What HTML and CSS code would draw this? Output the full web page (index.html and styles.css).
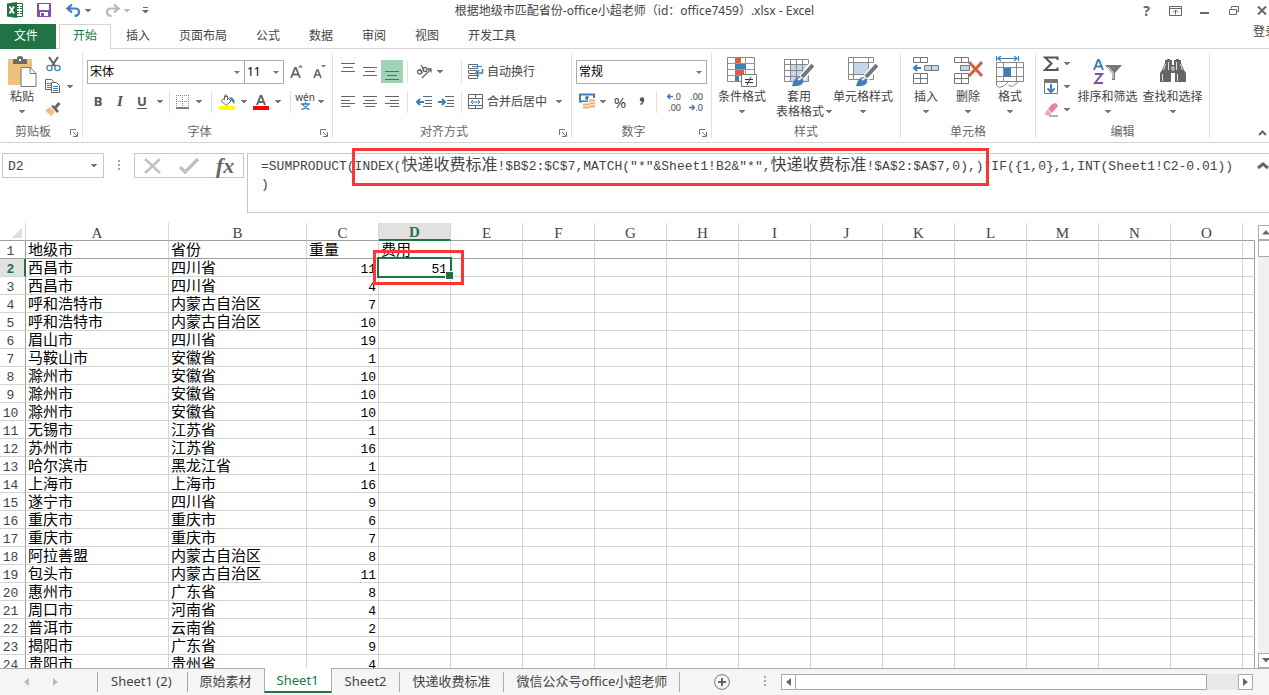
FILE: index.html
```html
<!DOCTYPE html>
<html lang="zh-CN">
<head>
<meta charset="utf-8">
<title>根据地级市匹配省份-office小超老师（id：office7459）.xlsx - Excel</title>
<link rel="stylesheet" href="styles.css">
<script src="sheet.js" defer></script>
</head>
<body>
<header class="titlebar">
  <div class="quick">
    <svg class="app-logo" width="16" height="16" viewBox="0 0 16 16"><path d="M9 1.5h6.500v13H9" fill="#fff" stroke="#217346"/><path d="M10 4.500h2m1 0h2m-5 2h2m1 0h2m-5 3h2m1 0h2m-5 2h2m1 0h2" stroke="#217346"/><path d="M0 1.500 10 0v16L0 14.500z" fill="#217346"/><path d="m2.500 4.500 4.500 7m0-7-4.500 7" stroke="#fff" stroke-width="1.800"/></svg>
    <button class="tool save" aria-label="保存"><svg width="14" height="14" viewBox="0 0 14 14"><path d="M0 0h14v14H0z" fill="#8250a8"/><path d="M2 1h10v6H2zM3 9h8v4H3z" fill="#fff"/><path d="M4 10h3v3H4z" fill="#8250a8"/></svg></button>
    <button class="tool undo" aria-label="撤消"><svg width="15" height="13" viewBox="0 0 15 13"><path d="M2 4.500h7q4 0 4 3.500 0 3.500-4.500 4M6 .5l-4.500 4 4.500 4" fill="none" stroke="#3f7dbb" stroke-width="2.200"/></svg></button>
    <span class="caret"></span>
    <button class="tool redo" aria-label="恢复"><svg width="15" height="13" viewBox="0 0 15 13"><path d="M13 4.500H6Q2 4.500 2 8q0 3.500 4.500 4M9 .5l4.500 4-4.500 4" fill="none" stroke="#b9b9b9" stroke-width="2.200"/></svg></button>
    <span class="caret pale"></span>
    <button class="tool custom" aria-label="自定义快速访问工具栏"><svg width="7" height="8" viewBox="0 0 7 8"><path d="M1 1.500h5" stroke="#666"/><path d="M0 4h7L3.500 7.500z" fill="#666"/></svg></button>
  </div>
  <h1 class="doc-title">根据地级市匹配省份-office小超老师（id：office7459）.xlsx - Excel</h1>
  <div class="window-tools">
    <button class="help" aria-label="帮助">?</button>
    <button aria-label="功能区显示选项"><svg width="13" height="10" viewBox="0 0 13 10"><path d="M.5.500h12v9H.5zM.5 2.500h12M6.500 8.500v-4M4 6.500l2.500-2.500L9 6.500" fill="none" stroke="#666"/></svg></button>
    <button aria-label="最小化"><svg width="9" height="10" viewBox="0 0 9 10"><path d="M0 7h9" stroke="#666" stroke-width="2"/></svg></button>
    <button aria-label="还原"><svg width="10" height="9" viewBox="0 0 10 9"><path d="M2.500 2.500V.5h7v5h-2" fill="none" stroke="#666"/><path d="M.5 3.500h7v5h-7z" fill="#fff" stroke="#666"/></svg></button>
    <button class="last" aria-label="关闭"><svg width="10" height="9" viewBox="0 0 10 9"><path d="m1 .5 8 8m0-8-8 8" stroke="#666" stroke-width="2"/></svg></button>
  </div>
</header>

<nav class="tabs">
  <button class="file-tab">文件</button>
  <button class="tab active">开始</button>
  <button class="tab">插入</button>
  <button class="tab">页面布局</button>
  <button class="tab">公式</button>
  <button class="tab">数据</button>
  <button class="tab">审阅</button>
  <button class="tab">视图</button>
  <button class="tab">开发工具</button>
  <a class="signin" href="#">登录</a>
</nav>

<section class="ribbon">
  <div class="group clipboard">
    <div class="body">
      <button class="big paste"><svg width="30" height="32" viewBox="0 0 30 32"><path d="M1 3h24v26H1z" fill="#ecc27c"/><path d="M6 3h4V1q3-2 6 0v2h4v5H6z" fill="#6a6a6a"/><path d="M12 3h2v2h-2z" fill="#fff"/><path d="M14 11.500h9l6 6v13H14z" fill="#fff" stroke="#777"/><path d="M23 11.500v6h6" fill="none" stroke="#777"/></svg><span>粘贴</span><span class="caret"></span></button>
      <div class="stack">
        <div class="line"><button class="tool" aria-label="剪切"><svg width="15" height="16" viewBox="0 0 15 16"><path d="m3 1 6 9M12 1 6 10" stroke="#666" stroke-width="2.200"/><circle cx="3.500" cy="12" r="2.600" fill="none" stroke="#3f7dbb" stroke-width="1.300"/><circle cx="11.500" cy="12" r="2.600" fill="none" stroke="#3f7dbb" stroke-width="1.300"/></svg></button></div>
        <div class="line"><button class="tool" aria-label="复制"><svg width="16" height="15" viewBox="0 0 16 15"><path d="M.5.500h6l2 2v8h-8z" fill="#fff" stroke="#666"/><path d="M2 4.500h4m-4 2h4m-4 2h4" stroke="#3f7dbb"/><path d="M6.500 3.500h5l3 3v7h-8z" fill="#fff" stroke="#666"/><path d="M8 7.500h5m-5 2h5m-5 2h5" stroke="#3f7dbb"/></svg></button><span class="caret"></span></div>
        <div class="line"><button class="tool" aria-label="格式刷"><svg width="16" height="15" viewBox="0 0 16 15"><path d="m5 5 5 5-4 4-6-5.500z" fill="#ecc27c"/><path d="m6 4 2-1 6 6-2 2z" fill="#666"/><path d="m10 6 4.500-5" stroke="#666" stroke-width="3"/></svg></button></div>
      </div>
    </div>
    <div class="caption"><span>剪贴板</span><button class="launcher" aria-label="剪贴板选项"><svg width="8" height="8" viewBox="0 0 8 8"><path d="M.5 6V.5H6M3 3l4 4M7.500 3v4.500H3" fill="none" stroke="#777"/></svg></button></div>
  </div>

  <div class="group font">
    <div class="body rows">
      <div class="line">
        <span class="select family"><select aria-label="字体"><option>宋体</option></select></span>
        <span class="select size"><select aria-label="字号"><option>11</option></select></span>
        <button class="tool grow" aria-label="增大字号"><svg width="14" height="16" viewBox="0 0 14 16"><path d="m1 14 4-10h1l4 10M3 10.500h5.500" fill="none" stroke="#666" stroke-width="1.800"/><path d="M8 3.500h5L10.500 1z" fill="#3f7dbb"/></svg></button>
        <button class="tool w22" aria-label="减小字号"><svg width="13" height="16" viewBox="0 0 13 16"><path d="m1 14 3-8h1l3 8M2.500 11h4" fill="none" stroke="#666" stroke-width="1.600"/><path d="M8 1h5l-2.500 2.500z" fill="#3f7dbb"/></svg></button>
      </div>
      <div class="line">
        <button class="tool w22 letter bold">B</button>
        <button class="tool w22 letter italic">I</button>
        <button class="tool w22 letter under">U</button>
        <span class="caret wide"></span><i class="sep"></i>
        <button class="tool w22" aria-label="边框"><svg width="14" height="14" viewBox="0 0 14 14"><path d="M.5 0v12M6.500 0v12M12.500 0v12M0 .5h13M0 6.500h13" stroke="#888" stroke-dasharray="1 1"/><path d="M0 13h13" stroke="#555" stroke-width="1.500"/></svg></button>
        <span class="caret"></span><i class="sep left"></i>
        <button class="tool w24" aria-label="填充颜色"><svg width="17" height="16" viewBox="0 0 17 16"><path d="m7 2 5 5-5 4.500L2.500 7z" fill="#fff" stroke="#666"/><path d="M5.500 6V2q1-3 3 0v4" fill="none" stroke="#666"/><path d="M10 3q6 0 5.500 7l-3-3z" fill="#3f7dbb"/><path d="M0 12h16v4H0z" fill="#ff0"/></svg></button>
        <span class="caret"></span>
        <button class="tool w24" aria-label="字体颜色"><svg width="16" height="16" viewBox="0 0 16 16"><path d="m4 11 3.500-9h1l3.500 9M5.500 8h5" fill="none" stroke="#666" stroke-width="2"/><path d="M0 12h16v4H0z" fill="red"/></svg></button>
        <span class="caret"></span><i class="sep left"></i>
        <button class="tool w22 pinyin" aria-label="拼音"><span>wén</span><svg width="9" height="8" viewBox="0 0 9 8"><path d="M4.500 0v2M0 2h9M2 2.500q2 4 6.500 5M7 2.500q-2 4-6.500 5" fill="none" stroke="#3f7dbb" stroke-width="1.300"/></svg></button>
        <span class="caret"></span>
      </div>
    </div>
    <div class="caption"><span>字体</span><button class="launcher" aria-label="字体设置"><svg width="8" height="8" viewBox="0 0 8 8"><path d="M.5 6V.5H6M3 3l4 4M7.500 3v4.500H3" fill="none" stroke="#777"/></svg></button></div>
  </div>

  <div class="group align">
    <div class="body rows">
      <div class="line">
        <button class="tool w22" aria-label="顶端对齐"><svg width="14" height="17" viewBox="0 0 14 17"><path d="M0 .5h14M2 4.500h10M0 8.500h14" stroke="#666"/></svg></button>
        <button class="tool w22" aria-label="垂直居中"><svg width="14" height="17" viewBox="0 0 14 17"><path d="M0 4.500h14M2 8.500h10M0 12.500h14" stroke="#666"/></svg></button>
        <button class="tool w22 on" aria-label="底端对齐"><svg width="14" height="17" viewBox="0 0 14 17"><path d="M0 8.500h14M2 12.500h10M0 16.500h14" stroke="#666"/></svg></button>
        <i class="sep near"></i>
        <button class="tool w22" aria-label="方向"><svg width="17" height="16" viewBox="0 0 17 16"><g fill="none" stroke="#666" stroke-width="1.300"><circle cx="3.500" cy="8" r="2"/><path d="m3.500 5 3 4"/><circle cx="9" cy="5.500" r="2"/><path d="m5 1 3 5"/></g><path d="m6 14 9-9M11.500 5H15v3.500" fill="none" stroke="#666" stroke-width="1.300"/></svg></button>
        <span class="caret"></span><i class="sep far"></i>
        <button class="tool text"><svg width="16" height="16" viewBox="0 0 16 16"><path d="M.5.500h9v4h-9zM.5 6.500h8v3h-8zM.5 11.500h9v3h-9z" fill="#fff" stroke="#666"/><path d="M4 2.500h10" stroke="#3f7dbb"/><path d="M14.500 5v4H8m3-3L8 9l3 3" fill="none" stroke="#3f7dbb" stroke-width="1.500"/></svg>自动换行</button>
      </div>
      <div class="line">
        <button class="tool w22" aria-label="左对齐"><svg width="14" height="12" viewBox="0 0 14 12"><path d="M0 .5h14M0 4.500h9M0 7.500h14M0 10.500h9" stroke="#666"/></svg></button>
        <button class="tool w22" aria-label="居中"><svg width="14" height="12" viewBox="0 0 14 12"><path d="M0 .5h14M2 4.500h10M0 7.500h14M2 10.500h10" stroke="#666"/></svg></button>
        <button class="tool w22" aria-label="右对齐"><svg width="14" height="12" viewBox="0 0 14 12"><path d="M0 .5h14M5 4.500h9M0 7.500h14M5 10.500h9" stroke="#666"/></svg></button>
        <i class="sep near"></i>
        <button class="tool w22" aria-label="减少缩进量"><svg width="16" height="12" viewBox="0 0 16 12"><path d="M7 .5h9M9 4.500h7M9 7.500h7M7 10.500h9" stroke="#666"/><path d="M1 6h7M4 3 1 6l3 3" fill="none" stroke="#3f7dbb" stroke-width="2"/></svg></button>
        <button class="tool w22" aria-label="增加缩进量"><svg width="16" height="12" viewBox="0 0 16 12"><path d="M7 .5h9M9 4.500h7M9 7.500h7M7 10.500h9" stroke="#666"/><path d="M0 6h7M4 3l3 3-3 3" fill="none" stroke="#3f7dbb" stroke-width="2"/></svg></button>
        <i class="sep slim"></i>
        <button class="tool text"><svg width="16" height="16" viewBox="0 0 16 16"><path d="M.5.500h14v14H.5zM.5 4.500h14m-14 7h14M7.500 0v4m0 8v3" fill="none" stroke="#666"/><path d="M3 8h9M5 6 3 8l2 2m5-4 2 2-2 2" fill="none" stroke="#3f7dbb"/></svg>合并后居中</button>
        <span class="caret drop"></span>
      </div>
    </div>
    <div class="caption"><span>对齐方式</span><button class="launcher" aria-label="对齐设置"><svg width="8" height="8" viewBox="0 0 8 8"><path d="M.5 6V.5H6M3 3l4 4M7.500 3v4.500H3" fill="none" stroke="#777"/></svg></button></div>
  </div>

  <div class="group number">
    <div class="body rows">
      <div class="line"><span class="select format"><select aria-label="数字格式"><option>常规</option></select></span></div>
      <div class="line">
        <button class="tool w22" aria-label="会计数字格式"><svg width="17" height="17" viewBox="0 0 17 17"><path d="M1 1.500h14v7H1z" fill="#fff" stroke="#3f7dbb" stroke-width="2"/><circle cx="8" cy="5" r="2" fill="#3f7dbb"/><path d="M9 5h7v10H9zM3 9h7v7H3z" fill="#fff"/><path d="M10 7.500h6m-6 3h6m-6 3h6m-12-2h6m-6 3h6" stroke="#e8b264" stroke-width="2"/></svg></button>
        <span class="caret"></span>
        <button class="tool w24 percent">%</button>
        <button class="tool w20" aria-label="千位分隔样式"><svg width="6" height="9" viewBox="0 0 6 9"><circle cx="3" cy="2.500" r="2.200" fill="#555"/><path d="M4.500 2.500Q4.500 6 1.500 7.500" fill="none" stroke="#555" stroke-width="1.400"/></svg></button>
        <i class="sep near"></i>
        <button class="tool w22 decimals" aria-label="增加小数位数"><span><svg width="6" height="7" viewBox="0 0 6 7"><path d="M0 3.500h6M3 1 .8 3.500 3 6" fill="none" stroke="#3f7dbb" stroke-width="1.500"/></svg>.0</span><span>.00</span></button>
        <button class="tool w22 decimals" aria-label="减少小数位数"><span>.00</span><span><svg width="6" height="7" viewBox="0 0 6 7"><path d="M0 3.500h6M3 1l2.200 2.500L3 6" fill="none" stroke="#3f7dbb" stroke-width="1.500"/></svg>.0</span></button>
      </div>
    </div>
    <div class="caption"><span>数字</span><button class="launcher" aria-label="数字设置"><svg width="8" height="8" viewBox="0 0 8 8"><path d="M.5 6V.5H6M3 3l4 4M7.500 3v4.500H3" fill="none" stroke="#777"/></svg></button></div>
  </div>

  <div class="group styles">
    <div class="body">
      <button class="big cond"><svg width="30" height="32" viewBox="0 0 30 32"><path d="M.5 1.500h27v24H.5z" fill="#fff" stroke="#888"/><path d="M8.500 1v25M18.500 1v25M.5 7.500h27m-27 6h27m-27 6h27" stroke="#999"/><path d="M8 2h6v5H8zM8 14h9v5H8z" fill="#d75f43"/><path d="M8 8h11v5H8zM8 20h4v5H8z" fill="#3f7dbb"/><path d="M14.500 18.500h15v12h-15z" fill="#fff" stroke="#777"/><path d="M18 23.500h8m-8 3h8M24 21l-4 8" stroke="#333"/></svg><span>条件格式</span><span class="caret"></span></button>
      <button class="big format-table"><svg width="30" height="32" viewBox="0 0 30 32"><path d="M.5 3.500h24v22H.5z" fill="#fff"/><path d="M7 9h18v17H7z" fill="#c3d6ec"/><path d="M.5 3.500h24v22H.5zM6.500 3v23m6-23v23m6-23v23M.5 8.500h24m-24 6h24m-24 6h24" fill="none" stroke="#888"/><path d="m18 22 11-14" stroke="#fff" stroke-width="7"/><path d="m18 21 11-12" stroke="#777" stroke-width="4"/><path d="M8 30q2-9 8-9 4 2 3 6-4 4-11 3z" fill="#3f7dbb"/><path d="m14 24 3-2" stroke="#fff" stroke-width="2"/></svg><span>套用</span><span class="two">表格格式<span class="caret"></span></span></button>
      <button class="big cell-style"><svg width="30" height="32" viewBox="0 0 30 32"><path d="M.5 1.500h25v22H.5z" fill="#fff"/><path d="M5 6h15v13H5z" fill="#c3d6ec"/><path d="M.5 1.500h25v22H.5zM5.500 1v23m15-23v23M.5 6.500h25m-25 12h25" fill="none" stroke="#888"/><path d="m18 22 11-14" stroke="#fff" stroke-width="7"/><path d="m18 21 11-12" stroke="#777" stroke-width="4"/><path d="M8 30q2-9 8-9 4 2 3 6-4 4-11 3z" fill="#3f7dbb"/><path d="m14 24 3-2" stroke="#fff" stroke-width="2"/></svg><span>单元格样式</span><span class="caret"></span></button>
    </div>
    <div class="caption"><span>样式</span></div>
  </div>

  <div class="group cells">
    <div class="body">
      <button class="big"><svg width="28" height="32" viewBox="0 0 28 32"><g fill="#fff" stroke="#777"><path d="M1.500 1.500h14v5h-14zM8.500 1v6M1.500 17.500h14v10h-14zM8.500 17v11M1.500 22.500h14"/><path d="M12.500 9.500h14v5h-14zM19.500 9v6" fill="#c3d6ec"/></g><path d="M2 12h7M5 9l-3 3 3 3" fill="none" stroke="#3f7dbb" stroke-width="2"/></svg><span>插入</span><span class="caret"></span></button>
      <button class="big"><svg width="30" height="32" viewBox="0 0 30 32"><g fill="#fff" stroke="#777"><path d="M1.500 1.500h14v5h-14zM8.500 1v6M1.500 17.500h14v10h-14zM8.500 17v11M1.500 22.500h14"/><path d="M7.500 9.500h9v5h-9z" fill="#c3d6ec"/></g><path d="m16 6 13 14m0-14L16 20" stroke="#d75f43" stroke-width="3"/></svg><span>删除</span><span class="caret"></span></button>
      <button class="big"><svg width="28" height="32" viewBox="0 0 28 32"><path d="M.5 0v5M22.500 0v5M2 2.500h19M5 0 2 2.500 5 5M18 0l3 2.500L18 5" fill="none" stroke="#3f7dbb" stroke-width="1.200"/><path d="M.5 6.500h27v19H.5zM7.500 6v20m13-20v20M.5 11.500h27m-27 9h27M.5 25.500v4l3 2 5-2 4-4m0 4 4 1 6-5" fill="none" stroke="#888"/><path d="M8 12h7v9H8z" fill="#3f7dbb"/></svg><span>格式</span><span class="caret"></span></button>
    </div>
    <div class="caption"><span>单元格</span></div>
  </div>

  <div class="group editing">
    <div class="body">
      <div class="stack">
        <div class="line"><button class="tool" aria-label="自动求和"><svg width="16" height="16" viewBox="0 0 16 16"><path d="M14.500 4V1.500H2l6.500 6L2 14h12.500v-2.500" fill="none" stroke="#555" stroke-width="2"/></svg></button><span class="caret"></span></div>
        <div class="line"><button class="tool" aria-label="填充"><svg width="14" height="15" viewBox="0 0 14 15"><path d="M.5.500h13v14H.5z" fill="#fff" stroke="#777"/><path d="M0 0h14v4H0z" fill="#777"/><path d="M7 5v8M3.500 9.500 7 13l3.500-3.500" fill="none" stroke="#3f7dbb" stroke-width="2"/></svg></button><span class="caret"></span></div>
        <div class="line"><button class="tool" aria-label="清除"><svg width="15" height="14" viewBox="0 0 15 14"><path d="m8 1 4-1 2 3-6 7-4-4z" fill="#ee8296"/><path d="m3.500 6.500 4 4-2 2-3 0-2-2z" fill="#f4a9b6"/><path d="M5 13h9" stroke="#666"/></svg></button><span class="caret"></span></div>
      </div>
      <button class="big"><svg width="30" height="32" viewBox="0 0 30 32"><path d="m1 14 4-10h1l4 10M3 10.500h5.500" fill="none" stroke="#3f7dbb" stroke-width="2"/><path d="M2 18h7l-7 9h8" fill="none" stroke="#8250a8" stroke-width="2"/><path d="M12 9h17l-7 8v7h-3v-7z" fill="#777"/><path d="m15 11 5 5.500V23" fill="none" stroke="#fff"/></svg><span>排序和筛选</span><span class="caret"></span></button>
      <button class="big"><svg width="26" height="32" viewBox="0 0 26 32"><path d="M5 7V4h2V3h3v1h2v5h2V4h2V3h3v1h2v3l3 7 2 3v9H15v-9h-4v9H0v-9l2-3z" fill="#666"/><path d="M2.500 18v7M5.500 8l-2 6M8.500 6v8M16.500 6v8M20.500 8l2 6M17.500 18v7M12 11h2v3h-2z" fill="none" stroke="#fff" stroke-width=".8"/></svg><span>查找和选择</span><span class="caret"></span></button>
    </div>
    <div class="caption"><span>编辑</span></div>
  </div>
  <button class="collapse" aria-label="折叠功能区"><svg width="9" height="6" viewBox="0 0 9 6"><path d="m1 5 3.500-3.500L8 5" fill="none" stroke="#666" stroke-width="2"/></svg></button>
</section>

<section class="formula-bar">
  <div class="name-box"><input aria-label="名称框" value="D2"><span class="caret"></span></div>
  <svg class="grip" width="2" height="11" viewBox="0 0 2 11"><path d="M0 0h2v2H0zM0 4h2v2H0zM0 8h2v2H0z" fill="#a5a5a5"/></svg>
  <div class="entry-tools">
    <button aria-label="取消"><svg width="18" height="16" viewBox="0 0 18 16"><path d="m1 1 15 14M16 1 1 15" stroke="#c2c2c2" stroke-width="2.500"/></svg></button>
    <button aria-label="输入"><svg width="20" height="16" viewBox="0 0 20 16"><path d="m1 9 5 5L19 1" fill="none" stroke="#c2c2c2" stroke-width="3.500"/></svg></button>
    <button class="fx" aria-label="插入函数">fx</button>
  </div>
  <div class="formula-box">
    <div class="formula" role="textbox" aria-label="编辑栏" contenteditable="true" spellcheck="false">=SUMPRODUCT(INDEX(<span class="han">快递收费标准</span>!$B$2:$C$7,MATCH("*"&amp;Sheet1!B2&amp;"*",<span class="han">快递收费标准</span>!$A$2:$A$7,0),)*IF({1,0},1,INT(Sheet1!C2-0.01))<br>)</div>
    <button class="expand" aria-label="折叠编辑栏"><svg width="12" height="8" viewBox="0 0 12 8"><path d="m1 6 5-4 5 4" fill="none" stroke="#666" stroke-width="3"/></svg></button>
    <div class="mark mark-formula"></div>
  </div>
</section>

<main class="workspace">
  <div class="pane">
    <table class="sheet">
      <colgroup><col class="c-head"><col class="c-a"><col class="c-b"><col class="c-n" span="13"><col></colgroup>
      <thead><tr id="letters"><th class="corner" aria-label="全选"></th></tr></thead>
      <tbody id="rows"></tbody>
    </table>
  </div>
  <div class="vscroll">
    <button aria-label="向上滚动"><svg width="8" height="5" viewBox="0 0 8 5"><path d="M0 4.500h8L4 0z" fill="#666"/></svg></button>
    <div class="vthumb"></div>
    <button class="down" aria-label="向下滚动"><svg width="8" height="5" viewBox="0 0 8 5"><path d="M0 0h8L4 4.500z" fill="#666"/></svg></button>
  </div>
</main>

<footer class="bottom">
  <div class="sheet-nav">
    <button aria-label="上一张"><svg width="5" height="8" viewBox="0 0 5 8"><path d="M5 0v8L0 4z" fill="#bbb"/></svg></button>
    <button aria-label="下一张"><svg width="5" height="8" viewBox="0 0 5 8"><path d="M0 0v8l5-4z" fill="#bbb"/></svg></button>
  </div>
  <button class="sheet-tab">Sheet1 (2)</button>
  <button class="sheet-tab before-current">原始素材</button>
  <button class="sheet-tab current">Sheet1</button>
  <button class="sheet-tab">Sheet2</button>
  <button class="sheet-tab">快递收费标准</button>
  <button class="sheet-tab">微信公众号office小超老师</button>
  <button class="add" aria-label="新工作表"><svg width="16" height="16" viewBox="0 0 16 16"><circle cx="8" cy="8" r="7.400" fill="none" stroke="#777"/><path d="M8 4v8M4 8h8" stroke="#666" stroke-width="2"/></svg></button>
  <svg class="grip" width="2" height="11" viewBox="0 0 2 11"><path d="M0 0h2v2H0zM0 4h2v2H0zM0 8h2v2H0z" fill="#a5a5a5"/></svg>
  <div class="hscroll">
    <button aria-label="向左滚动"><svg width="5" height="8" viewBox="0 0 5 8"><path d="M5 0v8L0 4z" fill="#666"/></svg></button>
    <div class="hthumb"></div>
    <div class="htrack"></div>
    <button aria-label="向右滚动"><svg width="5" height="8" viewBox="0 0 5 8"><path d="M0 0v8l5-4z" fill="#666"/></svg></button>
  </div>
</footer>
</body>
</html>
```

FILE: styles.css
```css
* { box-sizing: border-box; }
body {
  margin: 0;
  height: 100vh;
  display: flex;
  flex-direction: column;
  overflow: hidden;
  background: #fff;
  color: #444;
  font: 12px/16px "Noto Sans", "Noto Sans CJK SC", sans-serif;
}
button {
  margin: 0;
  padding: 0;
  border: 0;
  background: none;
  color: inherit;
  font: inherit;
  white-space: nowrap;
}
svg { display: block; flex: none; }
.caret {
  flex: none;
  width: 10px;
  height: 3px;
  background: linear-gradient(#777, #777) center top / 6px 1px no-repeat,
    linear-gradient(#777, #777) center 1px / 4px 1px no-repeat,
    linear-gradient(#777, #777) center 2px / 2px 1px no-repeat;
}
.caret.pale { opacity: .5; }
.caret.wide { width: 14px; }
.caret.drop { width: 24px; }

/* title bar */
.titlebar {
  display: grid;
  grid-template-columns: 1fr auto 1fr;
  height: 24px;
  flex: none;
}
.quick { display: flex; align-items: center; height: 20px; padding-left: 7px; }
.quick .save { margin-left: 14px; }
.quick .undo { margin-left: 15px; }
.quick .redo { margin-left: 12px; }
.quick .caret { margin-left: 2px; }
.quick .custom { margin-left: 10px; }
.doc-title { margin: 0; padding-top: 3px; font-size: 12px; font-weight: 400; }
.window-tools { display: flex; justify-content: flex-end; height: 21px; }
.window-tools button { width: 29px; display: flex; align-items: center; justify-content: center; }
.window-tools .help { font-size: 14px; font-weight: 700; color: #666; }
.window-tools .last { width: 21px; justify-content: flex-end; padding-right: 2px; }

/* ribbon tabs */
.tabs {
  display: flex;
  align-items: stretch;
  height: 25px;
  flex: none;
  gap: 1px;
  box-shadow: inset 0 -1px #d4d4d4;
}
.file-tab { width: 56px; margin-right: 2px; padding: 0 4px 2px 0; background: #217346; color: #fff; }
.tab { padding: 0 13px 2px; border: 1px solid transparent; border-bottom: 0; }
.tab.active { border-color: #d4d4d4; background: #fff; color: #217346; }
.signin {
  width: 16px;
  margin-left: auto;
  overflow: hidden;
  white-space: nowrap;
  color: #444;
  text-decoration: none;
}

/* ribbon */
.ribbon {
  display: flex;
  height: 94px;
  flex: none;
  border-bottom: 1px solid #d4d4d4;
}
.group {
  display: flex;
  flex-direction: column;
  flex: none;
  margin: 4px 0;
  border-right: 1px solid #e1e1e1;
}
.clipboard { width: 83px; }
.font { width: 250px; }
.align { width: 239px; }
.number { width: 140px; }
.styles { width: 189px; }
.cells { width: 135px; }
.editing { width: 174px; }
.body { display: flex; flex: 1; }
.rows { flex-direction: column; gap: 7px; padding-top: 7px; }
.line { display: flex; align-items: center; height: 23px; }
.font .body, .number .body, .align .body { padding-left: 4px; }
.styles .body { padding-left: 2px; }
.caption { display: flex; align-items: center; height: 13px; text-align: center; color: #666; }
.caption > span { flex: 1; }
.launcher { width: 16px; padding-left: 4px; padding-top: 3px; }
.tool { display: flex; align-items: center; justify-content: center; height: 23px; flex: none; }
.w20 { width: 20px; }
.w22 { width: 22px; }
.w24 { width: 24px; }
.on { background: #9fd5b7; }
.tool.text { gap: 3px; padding-left: 6px; }
.letter { font: bold 13px/23px "Noto Sans", sans-serif; color: #555; }
.italic { font-family: "Liberation Serif", serif; font-style: italic; font-size: 15px; }
.under { text-decoration: underline; text-underline-offset: 2px; }
.sep { width: 1px; height: 22px; margin: 0 2px; background: #e1e1e1; flex: none; }
.sep.left { margin: 0 3px 0 7px; }
.sep.near { margin: 0 5px 0 4px; }
.sep.far { margin: 0 0 0 16px; }
.sep.slim { margin: 0 0 0 4px; }
.stack { display: flex; flex-direction: column; }
.clipboard .stack { padding-left: 3px; }
.clipboard .stack .tool { width: 16px; }
.clipboard .stack .caret { margin-left: 4px; }
.clipboard .stack, .editing .stack { margin-top: -1px; }
.editing .stack { padding-left: 7px; width: 39px; }
.editing .stack .tool { width: 16px; }
.editing .stack .caret { margin-left: 3px; }
.big { display: flex; flex-direction: column; align-items: center; padding-top: 3px; }
.big > span { line-height: 15px; }
.big > svg { margin-bottom: 1px; }
.big > .caret { margin-top: 6px; }
.paste { width: 40px; margin-left: 2px; }
.cond { width: 56px; }
.format-table { width: 58px; }
.cell-style { width: 70px; }
.two { display: flex; align-items: center; padding-left: 12px; }
.cells .body { padding-left: 4px; }
.cells .big { width: 42px; }
.editing .big { width: 65px; }

.select {
  position: relative;
  display: block;
  height: 24px;
  border: 1px solid #ababab;
  background: #fff;
}
.select select {
  width: 100%;
  height: 22px;
  padding: 0 2px;
  border: 0;
  appearance: none;
  background: none;
  color: #000;
  font: inherit;
}
.select::after {
  content: "";
  position: absolute;
  right: 4px;
  top: 10px;
  border: 3px solid transparent;
  border-top-color: #777;
  border-bottom: 0;
}
.family { width: 158px; }
.size { width: 39px; border-left: 0; }
.format { width: 131px; }
.grow { width: 22px; margin-left: 2px; }
.pinyin { flex-direction: column; font-size: 10px; line-height: 9px; }
.percent { font-size: 15px; }
.decimals { flex-direction: column; align-items: flex-end; padding-right: 3px; font-size: 9px; line-height: 11px; }
.decimals span { display: flex; align-items: center; }
.collapse { margin: auto 2px 6px auto; }

/* formula bar */
.formula-bar {
  display: flex;
  align-items: flex-start;
  height: 80px;
  flex: none;
  padding: 10px 0 10px 2px;
}
.name-box {
  display: flex;
  align-items: center;
  width: 102px;
  height: 25px;
  padding-right: 4px;
  border: 1px solid #c6c6c6;
}
.name-box input {
  flex: 1;
  min-width: 0;
  padding: 2px 5px 0;
  border: 0;
  background: none;
  color: #444;
  font: 13px/20px "Liberation Mono", monospace;
}
.formula-bar .grip { margin: 7px 14px 0; }
.entry-tools {
  display: flex;
  justify-content: space-around;
  align-items: center;
  width: 110px;
  height: 25px;
  border: 1px solid #c6c6c6;
}
.fx { font: italic bold 22px/20px "Liberation Serif", serif; color: #666; }
.formula-box {
  position: relative;
  flex: 1;
  height: 60px;
  margin-left: 3px;
  border: 1px solid #c6c6c6;
  border-right: 0;
}
.formula {
  padding: 4px 0 0 13px;
  font: 13px/18px "Liberation Mono", "Noto Sans CJK SC", monospace;
  white-space: nowrap;
}
.han { font-size: 16px; line-height: 16px; }
.expand { position: absolute; right: 0; top: 8px; }
.mark { position: absolute; border: 3px solid #fa3636; pointer-events: none; }
.mark-formula { left: 104px; top: -6px; width: 637px; height: 38px; }

/* worksheet */
.workspace { display: flex; flex: 1; min-height: 0; gap: 3px; }
.pane { flex: 1; min-width: 0; overflow: hidden; }
.sheet {
  width: 100%;
  table-layout: fixed;
  border-collapse: separate;
  border-spacing: 0;
  font: 13px/13px "Liberation Mono", "Noto Sans CJK SC", monospace;
}
.c-head { width: 26px; }
.c-a { width: 143px; }
.c-b { width: 138px; }
.c-n { width: 72px; }
.sheet th, .sheet td {
  height: 18px;
  padding: 4px 0 0;
  border: 0 solid #d4d4d4;
  border-width: 0 1px 1px 0;
  white-space: nowrap;
}
.sheet th { color: #444; font-weight: 400; text-align: center; }
.sheet thead th {
  padding-top: 3px;
  border-bottom-color: #a0a0a0;
  font-family: "Liberation Serif", serif;
  font-size: 15px;
}
.sheet .corner {
  background: linear-gradient(135deg, transparent 50%, #dfdfdf 50%) 12px 5px / 10px 10px no-repeat;
}
.sheet tbody th { border-right-color: #a0a0a0; padding-right: 4px; }
.sheet tbody td:last-child { border-right-color: #a0a0a0; }
.sheet thead th:last-child { border-right-color: transparent; }
.sheet tbody tr:first-child > * { border-bottom-color: #a0a0a0; }
.sheet td { color: #000; }
.sheet .cn { padding-left: 2px; font-size: 15px; }
.sheet .num { padding-right: 2px; text-align: right; }
.sheet .picked { background: #e1e1e1; color: #217346; font-weight: 700; }
.sheet thead .picked { border-bottom: 2px solid #217346; }
.sheet tbody .picked { border-right: 2px solid #217346; padding-right: 3px; }
.sheet .selected { position: relative; padding-right: 3px; }
.cursor { position: absolute; inset: -2px; border: 2px solid #217346; }
.cursor::after {
  content: "";
  position: absolute;
  right: -4px;
  bottom: -4px;
  width: 7px;
  height: 7px;
  border: 1px solid #fff;
  background: #217346;
}
.mark-cell { left: -6px; top: -9px; width: 91px; height: 35px; }

.vscroll {
  display: flex;
  flex-direction: column;
  width: 11px;
  margin-top: 2px;
  background: #f0f0f0;
}
.vscroll button {
  display: flex;
  align-items: center;
  justify-content: center;
  width: 15px;
  height: 15px;
  border: 1px solid #ababab;
  background: #fff;
}
.vthumb { width: 15px; height: 17px; border: 1px solid #ababab; background: #fff; }
.vscroll .down { margin-top: auto; }

/* sheet tabs */
.bottom {
  display: flex;
  height: 27px;
  flex: none;
  background: #f5f5f5;
  box-shadow: inset 0 1px #ababab;
  font-size: 13px;
}
.sheet-nav { display: flex; align-items: center; gap: 24px; width: 98px; padding-left: 24px; position: relative; }
.sheet-nav::after, .sheet-tab::after {
  content: "";
  position: absolute;
  right: 0;
  top: 4px;
  height: 20px;
  border-right: 1px solid #ababab;
}
.sheet-tab { position: relative; height: 25px; padding: 0 13px; }
.sheet-nav + .sheet-tab { padding: 0 16px 0 13px; }
.sheet-tab.before-current { padding: 0 12px; }
.sheet-tab.current {
  padding: 0 12px;
  background: #fff;
  border: 1px solid #ababab;
  border-top: 0;
  border-bottom: 2px solid #217346;
  color: #217346;
}
.sheet-tab.current::after, .before-current::after { display: none; }
.add { margin: 0 34px; }
.bottom .grip { align-self: center; }
.hscroll { display: flex; flex: 1; height: 16px; margin: 6px 16px 0 15px; }
.hscroll button {
  display: flex;
  align-items: center;
  justify-content: center;
  width: 15px;
  border: 1px solid #ababab;
  background: #fff;
}
.hthumb { flex: 1; border: 1px solid #ababab; border-left: 0; background: #fff; }
.htrack { width: 31px; background: #e8e8e8; }
```

FILE: sheet.js
```js
const letters = ["A", "B", "C", "D", "E", "F", "G", "H", "I", "J", "K", "L", "M", "N", "O", ""];
const data = [
  ["地级市", "省份", "重量"],
  ["西昌市", "四川省", 11],
  ["西昌市", "四川省", 4],
  ["呼和浩特市", "内蒙古自治区", 7],
  ["呼和浩特市", "内蒙古自治区", 10],
  ["眉山市", "四川省", 19],
  ["马鞍山市", "安徽省", 1],
  ["滁州市", "安徽省", 10],
  ["滁州市", "安徽省", 10],
  ["滁州市", "安徽省", 10],
  ["无锡市", "江苏省", 1],
  ["苏州市", "江苏省", 16],
  ["哈尔滨市", "黑龙江省", 1],
  ["上海市", "上海市", 16],
  ["遂宁市", "四川省", 9],
  ["重庆市", "重庆市", 6],
  ["重庆市", "重庆市", 7],
  ["阿拉善盟", "内蒙古自治区", 8],
  ["包头市", "内蒙古自治区", 11],
  ["惠州市", "广东省", 8],
  ["周口市", "河南省", 4],
  ["普洱市", "云南省", 2],
  ["揭阳市", "广东省", 9],
  ["贵阳市", "贵州省", 4]
];

const head = document.getElementById("letters");
letters.forEach((letter) => {
  const th = document.createElement("th");
  th.textContent = letter;
  if (letter === "D") th.className = "picked";
  head.append(th);
});

const body = document.getElementById("rows");
data.forEach((record, index) => {
  const tr = document.createElement("tr");
  const th = document.createElement("th");
  th.textContent = index + 1;
  if (index === 1) th.className = "picked";
  tr.append(th);
  letters.forEach((letter, column) => {
    const td = document.createElement("td");
    let value = record[column];
    if (letter === "D" && index === 0) value = "费用";
    if (letter === "D" && index === 1) value = 51;
    if (value !== undefined) {
      td.textContent = value;
      td.className = typeof value === "number" ? "num" : "cn";
    }
    if (letter === "D" && index === 1) {
      td.classList.add("selected");
      td.insertAdjacentHTML("beforeend", '<span class="cursor"></span><span class="mark mark-cell"></span>');
    }
    tr.append(td);
  });
  body.append(tr);
});
```
